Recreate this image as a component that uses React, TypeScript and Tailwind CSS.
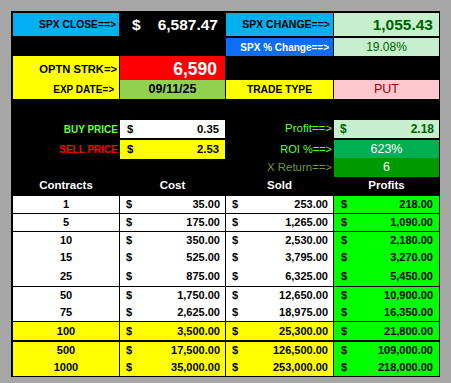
import React from "react";

// four spreadsheet columns: 13-119, 120-225, 226-333, 334-439
const grid = "grid grid-cols-[106px_105px_107px_105px] gap-x-px";

type TableRow = {
  qty: string;
  cost: string;
  sold: string;
  profit: string;
  h: string;
  gap: string;
  hot?: boolean;
};

const rows: TableRow[] = [
  { qty: "1", cost: "35.00", sold: "253.00", profit: "218.00", h: "h-[17px]", gap: "mt-px" },
  { qty: "5", cost: "175.00", sold: "1,265.00", profit: "1,090.00", h: "h-[17px]", gap: "mt-px" },
  { qty: "10", cost: "350.00", sold: "2,530.00", profit: "2,180.00", h: "h-[16px]", gap: "mt-px" },
  { qty: "15", cost: "525.00", sold: "3,795.00", profit: "3,270.00", h: "h-[16px]", gap: "mt-px" },
  { qty: "25", cost: "875.00", sold: "6,325.00", profit: "5,450.00", h: "h-[20px]", gap: "mt-px" },
  { qty: "50", cost: "1,750.00", sold: "12,650.00", profit: "10,900.00", h: "h-[16px]", gap: "mt-px" },
  { qty: "75", cost: "2,625.00", sold: "18,975.00", profit: "16,350.00", h: "h-[16px]", gap: "mt-px" },
  { qty: "100", cost: "3,500.00", sold: "25,300.00", profit: "21,800.00", h: "h-[18px]", gap: "mt-[2px]", hot: true },
  { qty: "500", cost: "17,500.00", sold: "126,500.00", profit: "109,000.00", h: "h-[15px]", gap: "mt-[2px]", hot: true },
  { qty: "1000", cost: "35,000.00", sold: "253,000.00", profit: "218,000.00", h: "h-[16px]", gap: "mt-[2px]", hot: true },
];

// accounting style cell: "$" pinned left, amount pinned right
const Money = ({
  value,
  className,
  pad = "pl-[6px] pr-[5px]",
}: {
  value: string;
  className: string;
  pad?: string;
}) => (
  <div className={`flex items-center justify-between ${pad} ${className}`}>
    <span>$</span>
    <span>{value}</span>
  </div>
);

export default function App() {
  return (
    <div
      className="h-[383px] w-[451px] bg-[#a6a6a6] pl-[11px] pt-[11px]"
      style={{ fontFamily: '"Liberation Sans", Arial, sans-serif' }}
    >
      <div className="flex h-[366px] w-[429px] flex-col bg-black pl-[2px] pt-[2px]">
        {/* spx close / change */}
        <div className={`${grid} h-[23px] shrink-0`}>
          <div className="flex items-center justify-end bg-[#00b0f0] pr-[3px] text-[10.3px] font-bold text-black">
            SPX CLOSE==&gt;
          </div>
          <div className="flex items-center justify-between pl-[12px] pr-[7px] text-[15.5px] font-bold text-white">
            <span>$</span>
            <span>6,587.47</span>
          </div>
          <div className="flex items-center justify-end bg-[#00b0f0] pr-[3px] text-[10.5px] font-bold text-black">
            SPX CHANGE==&gt;
          </div>
          <div className="flex items-center justify-end bg-[#c6efce] pr-[6px] text-[15.5px] font-bold text-[#006100]">
            1,055.43
          </div>
        </div>

        <div className={`${grid} mt-[2px] h-[15px] shrink-0`}>
          <div />
          <div />
          <div className="flex items-center justify-end bg-[#0d6ef5] pr-[4px] text-[10px] font-bold text-white">
            SPX % Change==&gt;
          </div>
          <div className="flex items-center justify-center bg-[#c6efce] text-[12px] text-[#006100]">
            19.08%
          </div>
        </div>

        {/* option strike */}
        <div className={`${grid} mt-[3px] h-[22px] shrink-0`}>
          <div className="flex items-center justify-end bg-[#ffff00] pr-[2px] text-[11.2px] font-bold text-black">
            OPTN STRK=&gt;
          </div>
          <div className="flex items-center justify-end bg-[#ff0000] pr-[8px] text-[17.5px] font-bold text-white">
            6,590
          </div>
        </div>

        <div className={`${grid} mt-[2px] h-[18px] shrink-0`}>
          <div className="flex items-center justify-end bg-[#ffff00] pr-[5px] text-[10px] font-bold text-black">
            EXP DATE=&gt;
          </div>
          <div className="flex items-center justify-center bg-[#92d050] text-[12.5px] font-bold text-black">
            09/11/25
          </div>
          <div className="flex items-center justify-center bg-[#ffff00] text-[10.3px] font-bold text-black">
            TRADE TYPE
          </div>
          <div className="flex items-center justify-center bg-[#ffc7ce] text-[12.5px] text-[#9c0006]">
            PUT
          </div>
        </div>

        {/* buy / sell */}
        <div className={`${grid} mt-[22px] h-[18px] shrink-0`}>
          <div className="flex items-center justify-end pr-px text-[10px] font-bold text-[#66ff33]">
            BUY PRICE
          </div>
          <Money value="0.35" pad="pl-[7px] pr-[6px]" className="bg-white text-[11.3px] font-bold text-black" />
          <div className="flex items-center justify-end pr-px text-[11.5px] text-[#66ff33]">
            Profit==&gt;
          </div>
          <Money value="2.18" className="bg-[#c6efce] text-[12px] font-bold text-[#006100]" />
        </div>

        <div className={`${grid} mt-[2px] h-[17px] shrink-0`}>
          <div className="flex items-center justify-end pr-px text-[10px] font-bold text-[#ff0000]">
            SELL PRICE
          </div>
          <Money value="2.53" pad="pl-[7px] pr-[6px]" className="bg-[#ffff00] text-[11.3px] font-bold text-black" />
          <div className="flex items-center justify-end pr-px text-[11px] text-[#66ff33]">
            ROI %==&gt;
          </div>
          <div className="flex items-center justify-center bg-[#00b050] text-[12.5px] text-white">
            623%
          </div>
        </div>

        <div className={`${grid} mt-px h-[18px] shrink-0`}>
          <div />
          <div />
          <div className="flex items-center justify-end pr-px text-[11.4px] text-[#77933c]">
            X Return==&gt;
          </div>
          <div className="flex items-center justify-center bg-[#009900] text-[12.5px] text-white">
            6
          </div>
        </div>

        {/* table */}
        <div className={`${grid} h-[19px] shrink-0 text-[11.5px] font-bold text-white`}>
          <div className="flex items-center justify-center">Contracts</div>
          <div className="flex items-center justify-center">Cost</div>
          <div className="flex items-center justify-center">Sold</div>
          <div className="flex items-center justify-center">Profits</div>
        </div>

        {rows.map((r) => {
          const bg = r.hot ? "bg-[#ffff00]" : "bg-white";
          return (
            <div key={r.qty} className={`${grid} ${r.h} ${r.gap} shrink-0 text-[11px] font-bold text-black`}>
              <div className={`flex items-center justify-center ${bg}`}>{r.qty}</div>
              <Money value={r.cost} className={bg} />
              <Money value={r.sold} className={bg} />
              <Money value={r.profit} pad="pl-[7px] pr-[6px]" className="bg-[#00ff00]" />
            </div>
          );
        })}
      </div>
    </div>
  );
}
